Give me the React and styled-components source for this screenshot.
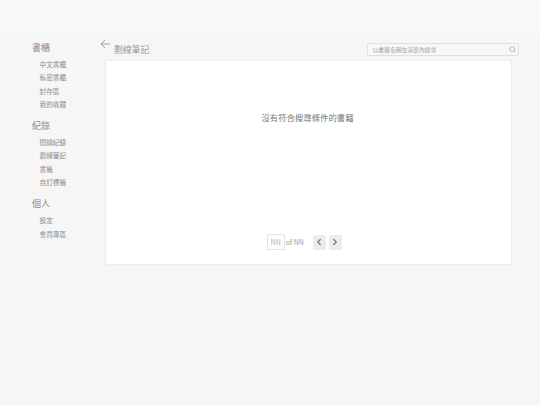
import React from "react";
import styled, { createGlobalStyle } from "styled-components";
import { Search, ChevronLeft, ChevronRight } from "lucide-react";

const Global = createGlobalStyle`
  html, body { margin: 0; padding: 0; background: #f6f6f6; }
  body { font-family: "Noto Sans CJK TC", "Noto Sans", sans-serif; color: #777; }
  * { box-sizing: border-box; }
`;
const Page = styled.div`width: 540px; height: 405px; overflow: hidden; background: #f6f6f6;`;
const TopBar = styled.header`height: 35px; background: #f8f8f8; border-bottom: 1px solid #f3f3f3;`;
const Body = styled.div`display: flex; align-items: flex-start;`;
const Sidebar = styled.nav`width: 105.5px; flex: none; padding: 5.5px 0 0 32px;`;
const Group = styled.section`margin-bottom: 7.2px;`;
const GroupTitle = styled.h3`margin: 0 0 4.4px; height: 13px; font-size: 9px; line-height: 13px; font-weight: 400; color: #8a8a8a;`;
const NavItem = styled.a`display: block; margin-left: 7.5px; height: 13.4px; font-size: 6.7px; line-height: 13.4px; color: #8a8a8a; white-space: nowrap;`;
const Main = styled.main`width: 405px; flex: none;`;
const Heading = styled.div`display: flex; align-items: flex-start; height: 26px; position: relative;`;
const Back = styled.svg`width: 11px; height: 11px; margin: 3.5px 0 0 -5.5px; flex: none;`;
const Title = styled.h2`margin: 8.5px 0 0 3px; font-size: 8.8px; line-height: 12px; font-weight: 400; color: #999; white-space: nowrap;`;
const SearchBox = styled.div`
  position: absolute; left: 261.5px; top: 8px; width: 152px; height: 13px;
  display: flex; align-items: center; justify-content: space-between; padding: 0 2px 0 4.5px;
  background: #f7f7f7; border: 1px solid #e0e0e0; border-radius: 1px;
  font-size: 5.8px; color: #a3a3a3; white-space: nowrap;
`;
const Card = styled.div`
  width: 405px; height: 203px; background: #fff; border-radius: 1px;
  box-shadow: 0 0 2px rgba(0,0,0,.14);
  display: flex; flex-direction: column; align-items: center;
`;
const Empty = styled.p`margin: 50px 1px 0 0; font-size: 8.4px; line-height: 13px; color: #7a7a7a; white-space: nowrap;`;
const Pager = styled.div`margin-top: 110px; margin-left: -4.5px; display: flex; align-items: center; height: 16px; font-size: 7px; color: #999;`;
const PageInput = styled.div`width: 18px; height: 16px; border: 1px solid #e4e4e4; border-radius: 1px; display: flex; align-items: center; justify-content: center; color: #b0b0b0; margin-right: 1px;`;
const Total = styled.span`margin-right: 9px;`;
const PageButton = styled.button`width: 13px; height: 15px; padding: 0; margin-right: 3px; border: 0; border-radius: 1px; background: #ececec; color: #777; display: flex; align-items: center; justify-content: center;`;

const groups = [
  ["書櫃", ["中文書櫃", "私密書櫃", "封存區", "我的收藏"]],
  ["紀錄", ["閱讀紀錄", "劃線筆記", "書籤", "自訂標籤"]],
  ["個人", ["設定", "會員專區"]],
];

export default function App() {
  return (
    <Page>
      <Global />
      <TopBar />
      <Body>
        <Sidebar>
          {groups.map(([title, items]) => (
            <Group key={title}>
              <GroupTitle>{title}</GroupTitle>
              {items.map((i) => <NavItem key={i}>{i}</NavItem>)}
            </Group>
          ))}
        </Sidebar>
        <Main>
          <Heading>
            <Back viewBox="0 0 11 11" fill="none" stroke="#808080" strokeWidth="0.7">
              <path d="M10 5H1M5 1L1 5L5 9" />
            </Back>
            <Title>劃線筆記</Title>
            <SearchBox>
              <span>以書籍名稱在清單內搜尋</span>
              <Search size={7} strokeWidth={2} color="#999" />
            </SearchBox>
          </Heading>
          <Card>
            <Empty>沒有符合搜尋條件的書籍</Empty>
            <Pager>
              <PageInput>NN</PageInput>
              <Total>of NN</Total>
              <PageButton><ChevronLeft size={10} strokeWidth={3} /></PageButton>
              <PageButton><ChevronRight size={10} strokeWidth={3} /></PageButton>
            </Pager>
          </Card>
        </Main>
      </Body>
    </Page>
  );
}
